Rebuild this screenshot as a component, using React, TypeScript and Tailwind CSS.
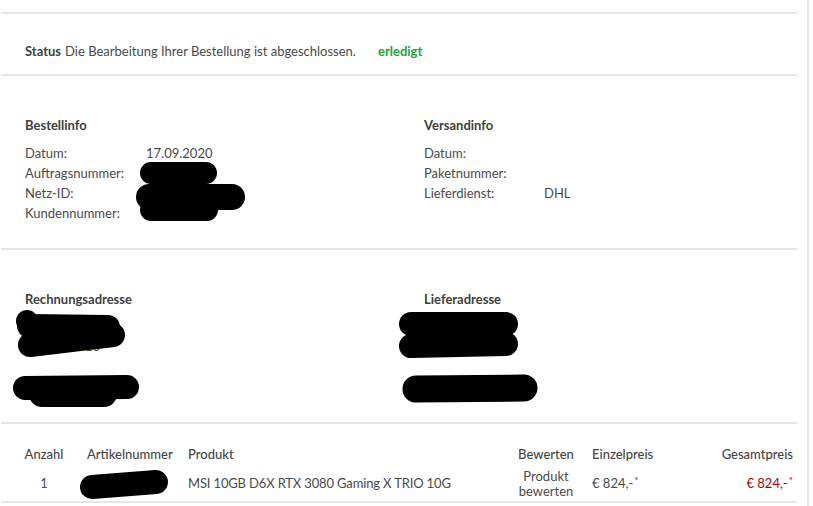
import React from "react";

const txt = "text-[#4a4a4a]";

function InfoRow({ label, value, labelW }: { label: string; value?: string; labelW: string }) {
  return (
    <div className="flex h-[20px] items-center">
      <div className={labelW}>{label}</div>
      <div>{value ?? ""}</div>
    </div>
  );
}

function Star() {
  return <span className="text-[10px] relative -top-[4px] ml-[1px]">*</span>;
}

export default function App() {
  return (
    <div
      className={`relative w-[813px] h-[506px] bg-white overflow-hidden flex text-[13px] ${txt}`}
      style={{ fontFamily: "Lato, 'Open Sans', sans-serif" }}
    >
      <div className="w-[796px] ml-[1px] flex flex-col pt-[12px]">
        {/* Status */}
        <div className="border-t-2 border-[#e6e6e6] h-[62px] pt-[28px] px-[24px]">
          <div className="flex items-center h-[20px]">
            <span className="font-bold text-[#3f3f3f]">Status</span>
            <span className="ml-[4px]">Die Bearbeitung Ihrer Bestellung ist abgeschlossen.</span>
            <span className="ml-[22px] font-bold text-[#24a03c]">erledigt</span>
          </div>
        </div>

        {/* Info */}
        <div className="border-t-2 border-[#e6e6e6] h-[174px] pt-[40px] px-[24px] flex">
          <div className="w-[399px]">
            <div className="font-bold text-[#404040] h-[20px] flex items-center">Bestellinfo</div>
            <div className="mt-[8px]">
              <InfoRow labelW="w-[121px]" label="Datum:" value="17.09.2020" />
              <InfoRow labelW="w-[121px]" label="Auftragsnummer:" />
              <InfoRow labelW="w-[121px]" label="Netz-ID:" />
              <InfoRow labelW="w-[121px]" label="Kundennummer:" />
            </div>
          </div>
          <div>
            <div className="font-bold text-[#404040] h-[20px] flex items-center">Versandinfo</div>
            <div className="mt-[8px]">
              <InfoRow labelW="w-[120px]" label="Datum:" />
              <InfoRow labelW="w-[120px]" label="Paketnummer:" />
              <InfoRow labelW="w-[120px]" label="Lieferdienst:" value="DHL" />
            </div>
          </div>
        </div>

        {/* Addresses */}
        <div className="border-t-2 border-[#e6e6e6] h-[174px] pt-[40px] px-[24px] flex">
          <div className="w-[399px]">
            <div className="font-bold text-[#404040] h-[20px] flex items-center">Rechnungsadresse</div>
            <div className="mt-[8px] pl-[60px] pt-[19px] h-[20px]">10</div>
          </div>
          <div>
            <div className="font-bold text-[#404040] h-[20px] flex items-center">Lieferadresse</div>
          </div>
        </div>

        {/* Table */}
        <div className="border-t-2 border-[#e6e6e6] h-[81px] pt-[22px] border-b-2">
          <div className="flex h-[18px] items-center font-medium text-[#454545]">
            <div className="ml-[22px] w-[42px] text-center">Anzahl</div>
            <div className="ml-[22px] w-[90px]">Artikelnummer</div>
            <div className="ml-[11px] w-[329px]">Produkt</div>
            <div className="w-[58px] text-center">Bewerten</div>
            <div className="ml-[17px] flex-1">Einzelpreis</div>
            <div className="mr-[4px] text-right">Gesamtpreis</div>
          </div>
          <div className="flex items-center h-[40px]">
            <div className="ml-[22px] w-[42px] text-center">1</div>
            <div className="ml-[22px] w-[90px]"></div>
            <div className="ml-[11px] w-[329px] tracking-[-0.15px]">MSI 10GB D6X RTX 3080 Gaming X TRIO 10G</div>
            <div className="w-[58px] text-center leading-[15px]">
              Produkt
              <br />
              bewerten
            </div>
            <div className="ml-[17px] flex-1">
              € 824,-<Star />
            </div>
            <div className="mr-[4px] text-right text-[#b00000]">
              € 824,-<Star />
            </div>
          </div>
        </div>
      </div>

      {/* right scroll edge */}
      <div className="ml-[10px] w-[2px] h-full bg-[#e6e6e6]" />

      {/* redactions */}
      <svg
        className="absolute left-0 top-0 pointer-events-none"
        width="813"
        height="506"
        viewBox="0 0 813 506"
      >
        <g stroke="#000" strokeLinecap="round" strokeLinejoin="round" fill="none">
          <line x1="151" y1="173" x2="206" y2="173" strokeWidth="22" />
          <line x1="149" y1="197" x2="232" y2="197" strokeWidth="26" />
          <line x1="151" y1="210" x2="207" y2="210" strokeWidth="22" />

          <line x1="29" y1="326" x2="108" y2="327" strokeWidth="24" />
          <line x1="30" y1="345" x2="113" y2="335" strokeWidth="24" />
          <circle cx="27" cy="321" r="11" fill="#000" strokeWidth="0" />

          <line x1="25" y1="388" x2="127" y2="387" strokeWidth="24" />
          <line x1="42" y1="394" x2="104" y2="394" strokeWidth="26" />

          <line x1="411" y1="324" x2="506" y2="324" strokeWidth="24" />
          <line x1="411" y1="346" x2="506" y2="344" strokeWidth="24" />

          <line x1="416" y1="389" x2="524" y2="388" strokeWidth="27" />

          <line x1="92" y1="487" x2="156" y2="482" strokeWidth="24" />
        </g>
      </svg>
    </div>
  );
}
